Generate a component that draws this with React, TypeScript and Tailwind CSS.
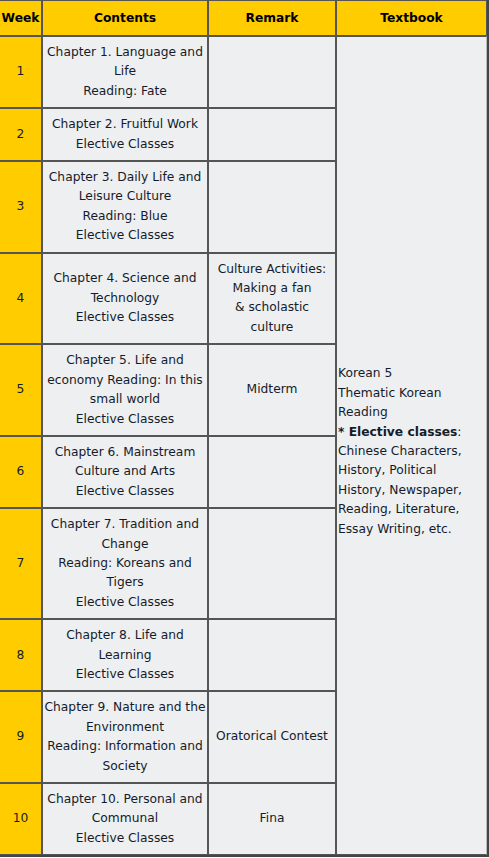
import React from "react";

type Row = {
  week: string;
  contents: string[];
  remark?: string[];
};

const rows: Row[] = [
  { week: "1", contents: ["Chapter 1. Language and Life", "Reading: Fate"] },
  { week: "2", contents: ["Chapter 2. Fruitful Work", "Elective Classes"] },
  {
    week: "3",
    contents: ["Chapter 3. Daily Life and Leisure Culture", "Reading: Blue", "Elective Classes"],
  },
  {
    week: "4",
    contents: ["Chapter 4. Science and Technology", "Elective Classes"],
    remark: ["Culture Activities:", "Making a fan", "& scholastic", "culture"],
  },
  {
    week: "5",
    contents: ["Chapter 5. Life and economy Reading: In this small world", "Elective Classes"],
    remark: ["Midterm"],
  },
  { week: "6", contents: ["Chapter 6. Mainstream Culture and Arts", "Elective Classes"] },
  {
    week: "7",
    contents: ["Chapter 7. Tradition and Change", "Reading: Koreans and Tigers", "Elective Classes"],
  },
  { week: "8", contents: ["Chapter 8. Life and Learning", "Elective Classes"] },
  {
    week: "9",
    contents: ["Chapter 9. Nature and the Environment", "Reading: Information and Society"],
    remark: ["Oratorical Contest"],
  },
  {
    week: "10",
    contents: ["Chapter 10. Personal and Communal", "Elective Classes"],
    remark: ["Fina"],
  },
];

const lines = (items: string[]) =>
  items.map((t, i) => (
    <React.Fragment key={i}>
      {i > 0 && <br />}
      {t}
    </React.Fragment>
  ));

const th = "border border-[#555] bg-[#ffcc00] py-[7px] px-px text-center font-bold leading-[20px] text-black";
const td = "border border-[#555] bg-[#eeeff1] py-[6px] px-px text-center align-middle";

export default function App() {
  return (
    <div className="w-[489px] h-[858px] overflow-hidden bg-white font-['DejaVu_Sans','Verdana',sans-serif] text-[12.25px] leading-[19.4px] text-[#141c2b]">
      <table className="ml-[-1px] w-[490px] table-fixed border-separate border-spacing-0 border-r-2 border-b-2 border-[#444]">
        <thead>
          <tr>
            <th className={`${th} w-[43px]`}>Week</th>
            <th className={`${th} w-[166px]`}>Contents</th>
            <th className={`${th} w-[128px]`}>Remark</th>
            <th className={`${th} w-[151px]`}>Textbook</th>
          </tr>
        </thead>
        <tbody>
          {rows.map((r, i) => (
            <tr key={r.week}>
              <td className="border border-[#555] bg-[#ffcc00] py-[6px] px-px text-center align-middle">
                {r.week}
              </td>
              <td className={td}>{lines(r.contents)}</td>
              <td className={td}>{r.remark ? lines(r.remark) : null}</td>
              {i === 0 && (
                <td
                  rowSpan={rows.length}
                  className="border border-[#555] border-r-[#bbb] bg-[#eeeff1] pt-[16px] pb-[4px] pl-px pr-[3px] text-left align-middle"
                >
                  Korean 5
                  <br />
                  Thematic Korean Reading
                  <br />
                  <b>* Elective classes</b>: Chinese Characters, History, Political History,
                  Newspaper, Reading, Literature, Essay Writing, etc.
                </td>
              )}
            </tr>
          ))}
        </tbody>
      </table>
    </div>
  );
}
